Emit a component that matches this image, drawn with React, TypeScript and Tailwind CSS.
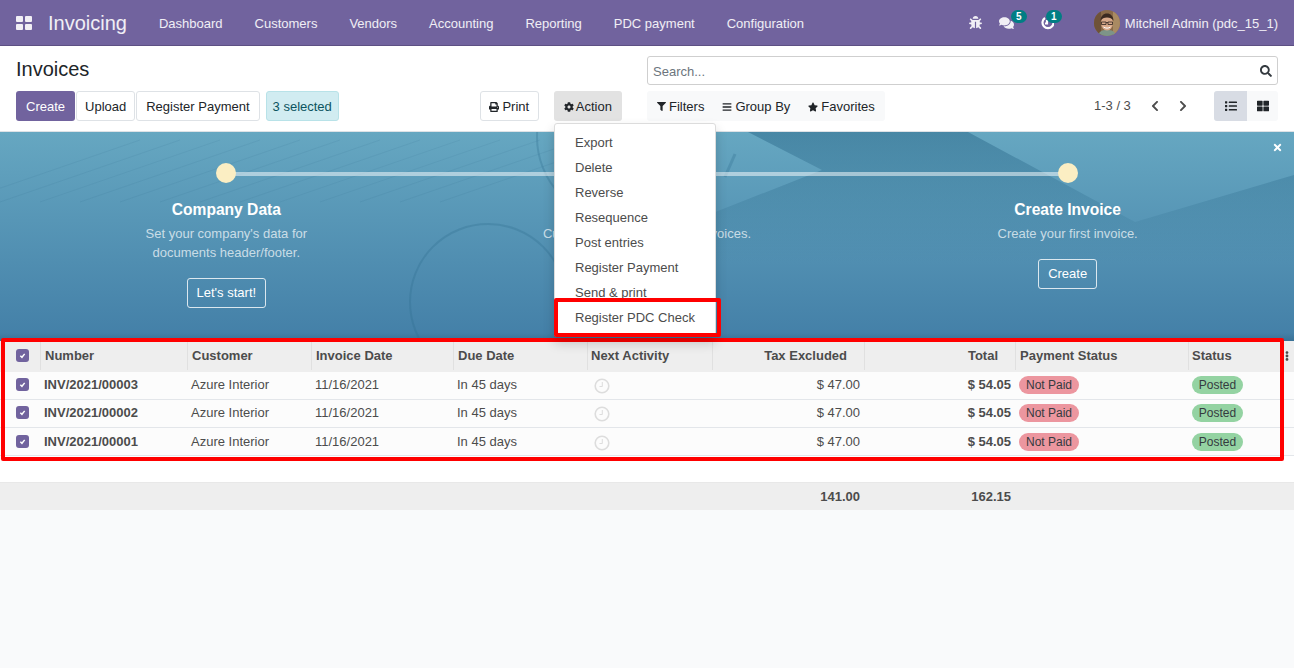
import React from 'react';
import {
  FaBars,
  FaBug,
  FaChevronLeft,
  FaChevronRight,
  FaCog,
  FaComments,
  FaEllipsisV,
  FaFilter,
  FaList,
  FaPrint,
  FaSearch,
  FaStar,
  FaThLarge,
  FaTimes,
} from 'react-icons/fa';

const MENU = ['Dashboard', 'Customers', 'Vendors', 'Accounting', 'Reporting', 'PDC payment', 'Configuration'];
const ACTIONS = ['Export', 'Delete', 'Reverse', 'Resequence', 'Post entries', 'Register Payment', 'Send & print', 'Register PDC Check'];
const INVOICES = ['INV/2021/00003', 'INV/2021/00002', 'INV/2021/00001'];
const COLS = 'grid grid-cols-[40px_147px_124px_142px_134px_125px_152px_151px_173px_106px]';
const PAPER_LINES = [20, 60, 100, 140, 180, 220, 260, 300, 340, 380, 420, 460, 500];

function Check() {
  return (
    <span className="flex h-[13px] w-[13px] items-center justify-center rounded-[3px] bg-[#71639e]">
      <svg viewBox="0 0 10 10" className="h-[9px] w-[9px]" fill="none" stroke="white" strokeWidth="1.6">
        <path d="M2.6 5.2 4.4 7 7.4 3.2" />
      </svg>
    </span>
  );
}

function ActivityClock() {
  return (
    <svg viewBox="0 0 16 16" className="mt-[2px] h-4 w-4" fill="none" stroke="#dddddd">
      <circle cx="8" cy="8" r="6.800" strokeWidth="1.600" />
      <path d="M8.300 4v4.500H5.500" strokeWidth="1" />
    </svg>
  );
}

function Avatar() {
  return (
    <svg viewBox="0 0 26 26" className="h-[26px] w-[26px] rounded-full">
      <rect width="26" height="26" fill="#8a6a48" />
      <rect x="0" y="0" width="7" height="26" fill="#6e5238" />
      <rect x="19" y="0" width="7" height="26" fill="#a98a62" />
      <path d="M4 26c1-5 4-6 9-6s8 1 9 6z" fill="#7d9488" />
      <ellipse cx="13" cy="13" rx="6" ry="7.5" fill="#d8a98a" />
      <path d="M6.5 11c0-5 3-7.500 6.500-7.500s6.500 2.500 6.500 7.500c-1.500-3-3.500-3.500-6.500-3.500s-5 .5-6.500 3.500z" fill="#3b2a20" />
      <path d="M7.500 12h4.500v2.500h-4.500zM14 12h4.500v2.500h-4.500zM12 12.600h2" fill="none" stroke="#2d2520" strokeWidth=".8" />
      <path d="M9.500 17c2 1.500 5 1.500 7 0" fill="none" stroke="#fff" strokeWidth="1" />
    </svg>
  );
}

function TopBar() {
  return (
    <header className="flex h-[46px] items-center border-b border-[#5d5083] bg-[#71639e] text-[13px] text-white/90">
      <div className="ml-4 grid h-[14px] w-4 grid-cols-2 gap-[2px]">
        <span className="rounded-[1px] bg-white/90" />
        <span className="rounded-[1px] bg-white/90" />
        <span className="rounded-[1px] bg-white/90" />
        <span className="rounded-[1px] bg-white/90" />
      </div>
      <span className="ml-4 mr-4 text-[20px] text-white/90">Invoicing</span>
      {MENU.map((m) => (
        <span key={m} className="px-4 pt-[2px]">{m}</span>
      ))}
      <div className="ml-auto flex items-center">
        <FaBug className="h-[13px] w-[13px]" />
        <span className="relative ml-[17px]">
          <FaComments className="h-[14px] w-[15px]" />
          <span className="absolute left-[12px] top-[-6px] flex h-[13px] w-4 items-center justify-center rounded-full bg-[#017e84] text-[10px] font-bold text-white">5</span>
        </span>
        <span className="relative ml-[26px]">
          <svg viewBox="0 0 14 14" className="h-[14px] w-[14px]" fill="none" stroke="white" strokeWidth="2.200">
            <path d="M5 2a5.500 5.500 0 1 0 6 0M7 4v3.500h-2" />
          </svg>
          <span className="absolute left-[6px] top-[-6px] flex h-[13px] w-4 items-center justify-center rounded-full bg-[#017e84] text-[10px] font-bold text-white">1</span>
        </span>
        <span className="ml-10 mr-[5px]"><Avatar /></span>
        <span className="mr-4 pt-[2px]">Mitchell Admin (pdc_15_1)</span>
      </div>
    </header>
  );
}

function ControlPanel() {
  const btn = 'flex h-[30px] items-center rounded-[3px] border border-[#dee2e6] bg-white pt-[2px] text-[#212529]';
  return (
    <section className="flex h-[86px] border-b border-[#dee2e6] bg-white text-[13px] text-[#212529]">
      <div className="w-[647px] pl-4">
        <h1 className="mt-[10px] h-[35px] text-[20px] leading-[26px]">Invoices</h1>
        <div className="flex items-center">
          <button className="flex h-[30px] items-center rounded-[3px] bg-[#71639e] px-[10px] pt-[2px] text-white">Create</button>
          <button className={`${btn} ml-px px-[8px]`}>Upload</button>
          <button className={`${btn} ml-px px-[9px]`}>Register Payment</button>
          <span className="ml-[6px] flex h-[30px] items-center rounded-[3px] border border-[#b8e2e8] bg-[#d1ecf1] px-[6px] pt-[2px] text-[#0c5460]">3 selected</span>
          <button className={`${btn} ml-[141px] w-[59px] justify-center gap-[3px]`}><FaPrint className="h-[10px] w-[10px]" />Print</button>
          <button className="ml-[15px] flex h-[30px] w-[68px] items-center justify-center gap-[2px] rounded-[3px] bg-[#e2e2e2] pt-[2px]"><FaCog className="h-[10px] w-[10px]" />Action</button>
        </div>
      </div>
      <div className="w-[631px] pt-[10px]">
        <div className="flex h-[29px] items-center justify-between rounded-[3px] border border-[#cfcfcf] px-[5px]">
          <span className="pt-[2px] text-[#6c757d]">Search...</span>
          <FaSearch className="h-3 w-3 text-[#343a40]" />
        </div>
        <div className="mt-[6px] flex items-center">
          <div className="flex h-[30px] w-[238px] shrink-0 items-center gap-[18px] rounded-[3px] bg-[#f8f9fa] pl-[10px] pt-[1px]">
            <span className="flex items-center gap-[3px]"><FaFilter className="h-[9px] w-[9px]" />Filters</span>
            <span className="flex items-center gap-[3px]"><FaBars className="h-[10px] w-[10px]" />Group By</span>
            <span className="flex items-center gap-[3px]"><FaStar className="h-[10px] w-[10px]" />Favorites</span>
          </div>
          <span className="ml-[209px] whitespace-nowrap text-[#4c4c4c]">1-3 / 3</span>
          <FaChevronLeft className="ml-[18px] h-3 w-3 shrink-0 text-[#4c4c4c]" />
          <FaChevronRight className="ml-4 h-3 w-3 shrink-0 text-[#4c4c4c]" />
          <div className="ml-auto flex h-[30px] w-16 shrink-0 overflow-hidden rounded-[3px] bg-[#f8f9fa]">
            <span className="flex w-[33px] items-center justify-center bg-[#d8dce4]"><FaList className="h-3 w-3 text-[#212529]" /></span>
            <span className="flex w-[31px] items-center justify-center"><FaThLarge className="h-3 w-3 text-[#212529]" /></span>
          </div>
        </div>
      </div>
    </section>
  );
}

function Step({ title, lines, cta }: { title?: string; lines: string[]; cta?: string }) {
  return (
    <div className="flex flex-col items-center text-center">
      <span className="h-5 w-5 rounded-full bg-[#fbeec3]" />
      <h3 className="mt-[17px] h-5 text-[15.6px] font-bold leading-5 text-white">{title}</h3>
      <div className="mt-[4px] text-[13px] leading-[19px] text-white/70">
        {lines.map((l) => <p key={l}>{l}</p>)}
      </div>
      {cta ? (
        <button className="mt-[16px] flex h-[30px] items-center rounded-[3px] border border-white/80 px-[9px] text-[13px] text-white">{cta}</button>
      ) : null}
    </div>
  );
}

function Banner() {
  return (
    <section className="relative h-[209px] overflow-hidden bg-gradient-to-b from-[#66a7c1] to-[#437fa7]">
      {/* the desk photo behind the onboarding steps */}
      <svg className="absolute inset-0 h-full w-full" viewBox="0 0 1294 209">
        <defs>
          <linearGradient id="band" x1="0" y1="0" x2="0" y2="1">
            <stop offset="0" stopColor="#2f6d8e" stopOpacity=".55" />
            <stop offset="1" stopColor="#2f6d8e" stopOpacity="0" />
          </linearGradient>
        </defs>
        <path d="M748 0H968L1135 90 1294 43V130H690V90L822 38z" fill="url(#band)" />
        <g stroke="#2f6d8e" strokeOpacity=".12" strokeWidth="1">
          {PAPER_LINES.map((x) => (
            <path key={x} d={`M${x - 60} 70 ${x + 120} 8`} />
          ))}
        </g>
        <g fill="none" stroke="#2f6d8e" strokeOpacity=".3" strokeWidth="2">
          <circle cx="488" cy="170" r="78" />
          <circle cx="620" cy="5" r="83" />
          <path d="M725 45 735 22" strokeWidth="3" />
        </g>
      </svg>
      <div className="absolute inset-x-0 bottom-0 h-2 bg-gradient-to-b from-transparent to-[#33688a]/60" />
      <div className="absolute left-[226px] right-[226px] top-[40px] h-1 bg-white/50" />
      <FaTimes className="absolute right-[11px] top-[10px] h-[11px] w-[11px] text-white" />
      <div className="relative grid grid-cols-3 px-4 pt-[31px]">
        <Step title="Company Data" lines={["Set your company's data for", 'documents header/footer.']} cta="Let's start!" />
        <Step lines={['Customize the look of your invoices.']} />
        <Step title="Create Invoice" lines={['Create your first invoice.']} cta="Create" />
      </div>
    </section>
  );
}

function InvoiceTable() {
  const th = 'flex items-center border-l border-[#e0e0e0]';
  return (
    <section className="relative bg-white text-[13px] text-[#4c4c4c]">
      <div className={`${COLS} h-[31px] items-stretch bg-[#eeeeee] pb-[2px] font-bold`}>
        <span className="flex items-center pl-[16px]"><Check /></span>
        <span className={`${th} pl-[4px]`}>Number</span>
        <span className={`${th} pl-[4px]`}>Customer</span>
        <span className={`${th} pl-[4px]`}>Invoice Date</span>
        <span className={`${th} pl-[4px]`}>Due Date</span>
        <span className={`${th} pl-[3px]`}>Next Activity</span>
        <span className={`${th} justify-end pr-[17px]`}>Tax Excluded</span>
        <span className={`${th} justify-end pr-[17px]`}>Total</span>
        <span className={`${th} pl-[4px]`}>Payment Status</span>
        <span className={`${th} justify-between pl-[3px] pr-[3px]`}>Status<FaEllipsisV className="h-[10px] w-[8px]" /></span>
      </div>
      {INVOICES.map((inv, i) => (
        <div key={inv} className={`${COLS} h-[28px] items-center border-b border-[#e3e6ea] bg-[#fcfcfc] ${i === 2 ? 'pb-0' : 'pb-[2px]'}`}>
          <span className="pl-[16px]"><Check /></span>
          <span className="pl-[4px] font-bold">{inv}</span>
          <span className="pl-[4px]">Azure Interior</span>
          <span className="pl-[4px]">11/16/2021</span>
          <span className="pl-[4px]">In 45 days</span>
          <span className="pl-[7px]"><ActivityClock /></span>
          <span className="pr-[4px] text-right">$ 47.00</span>
          <span className="pr-[4px] text-right font-bold">$ 54.05</span>
          <span className="pl-[4px]"><span className="flex h-[18px] w-[60px] items-center justify-center rounded-full bg-[#ec969f] text-[12px] text-[#343a40]">Not Paid</span></span>
          <span className="pl-[4px]"><span className="flex h-[18px] w-[51px] items-center justify-center rounded-full bg-[#94d3a2] text-[12px] text-[#343a40]">Posted</span></span>
        </div>
      ))}
      <div className="h-[26px] bg-white" />
      <div className={`${COLS} h-[28px] items-center border-t border-[#e8e8e8] bg-[#eeeeee] font-bold`}>
        <span className="col-start-7 pr-[4px] text-right">141.00</span>
        <span className="pr-[4px] text-right">162.15</span>
      </div>
      {/* red annotation around the list */}
      <div className="absolute left-[1px] top-[-3px] h-[123px] w-[1283px] rounded-[2px] border-4 border-[#ff0000]" />
    </section>
  );
}

function ActionMenu() {
  return (
    <div className="absolute left-[554px] top-[123px] w-[162px] rounded-[3px] border border-[#dcdcdc] bg-white pt-[6px] text-[13px] text-[#4c4c4c] shadow-[0_6px_12px_rgba(0,0,0,0.18)]">
      {ACTIONS.map((a) => (
        <div key={a} className="flex h-[25px] items-center pl-5">{a}</div>
      ))}
      <div className="h-[6px]" />
      <div className="absolute left-[-1px] top-[174px] h-[39px] w-[167px] rounded-[2px] border-4 border-[#ff0000]" />
    </div>
  );
}

export default function App() {
  return (
    <div className="relative min-h-[668px] bg-[#f9fafb] font-['Liberation_Sans',Arial,sans-serif]">
      <TopBar />
      <ControlPanel />
      <Banner />
      <InvoiceTable />
      <ActionMenu />
    </div>
  );
}
